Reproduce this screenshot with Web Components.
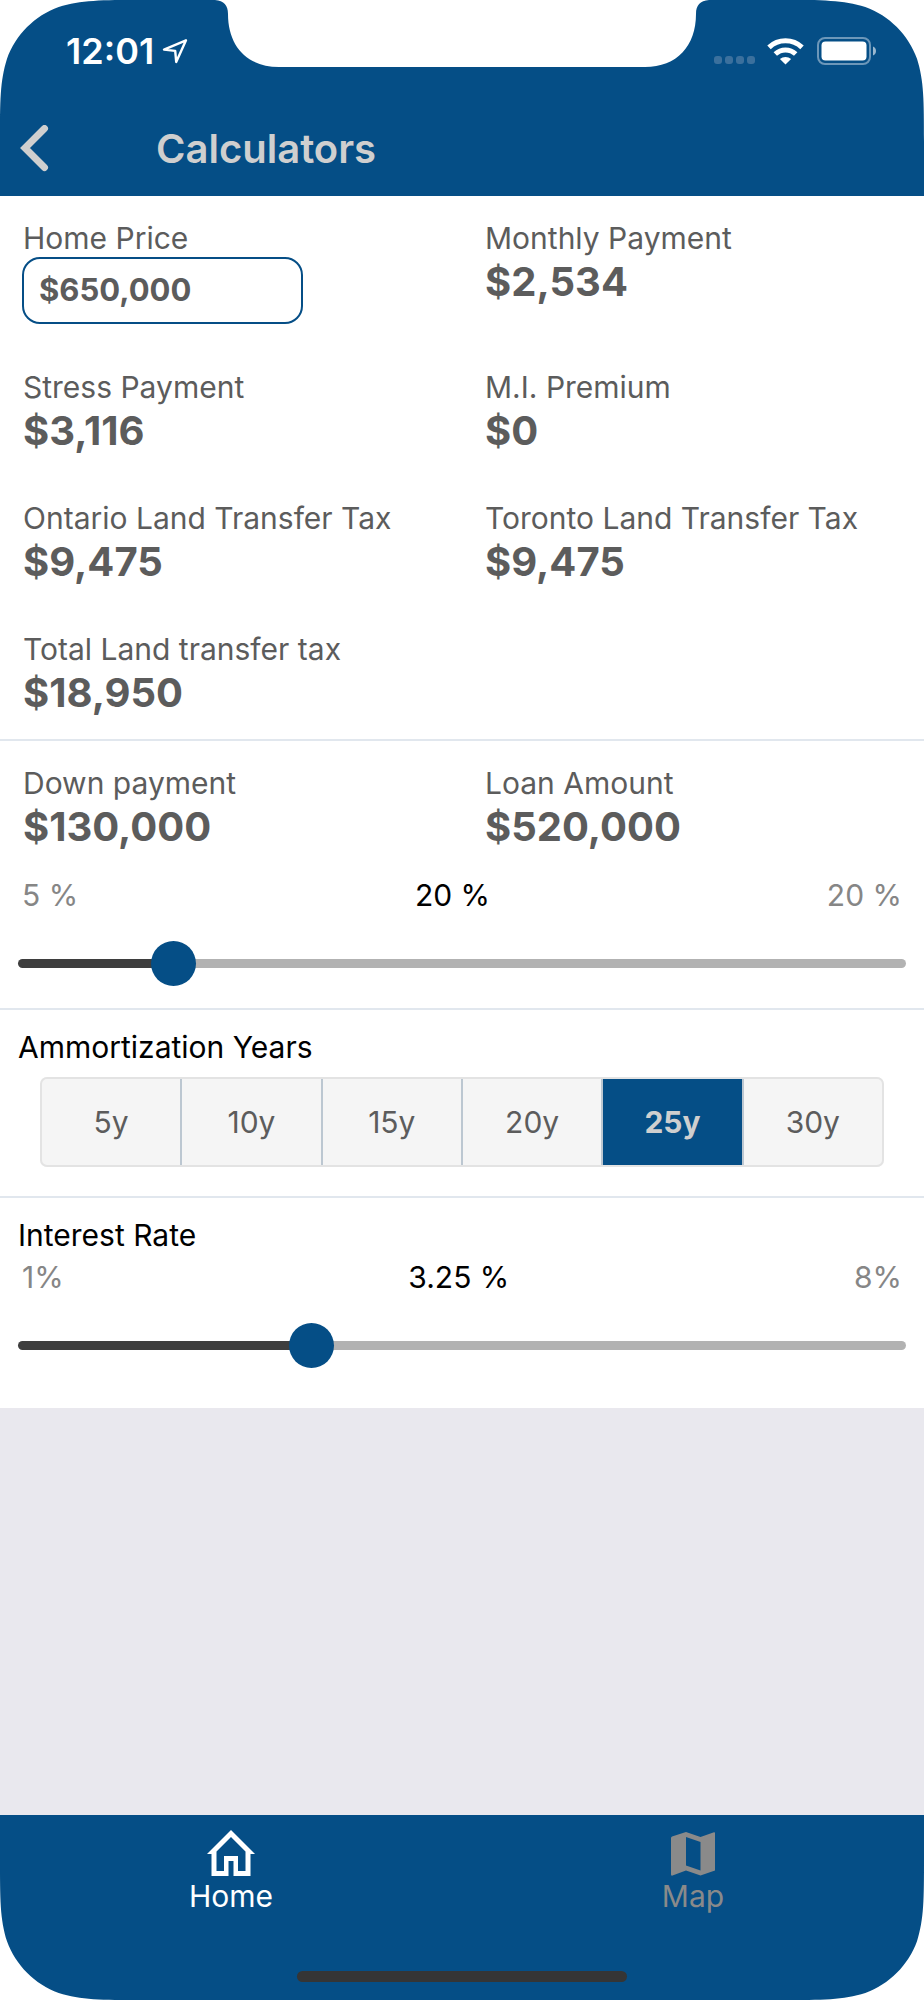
<!DOCTYPE html>
<html lang="en">
<head>
<meta charset="utf-8">
<meta name="viewport" content="width=device-width, initial-scale=1">
<title>Calculators</title>
<style>
  :root {
    --brand: #054e86;
    --on-brand: #cfcfcf;
    --text: #5c5c5c;
    --muted: #868686;
    --rule: #e1e7ee;
  }
  body {
    margin: 0;
    background: #fff;
    color: #000;
    font: 400 30px/36px Inter, "Liberation Sans", sans-serif;
  }
</style>
</head>
<body>
<calculator-app></calculator-app>

<script>
const define = (name, html, setup) => {
  const template = document.createElement('template');
  template.innerHTML = html;
  customElements.define(name, class extends HTMLElement {
    constructor() {
      super();
      this.attachShadow({ mode: 'open' }).append(template.content.cloneNode(true));
    }
    connectedCallback() {
      if (setup && !this.ready) { this.ready = true; setup(this, this.shadowRoot); }
    }
  });
};

/* Rounded screen corner, drawn for the top left and turned for the others */
define('screen-corner', `
  <style>
    :host { position: absolute; top: 0; left: 0; line-height: 0; pointer-events: none; }
    :host([at="top-right"]) { left: auto; right: 0; transform: scaleX(-1); }
    :host([at="bottom-left"]) { top: auto; bottom: 0; transform: scaleY(-1); }
    :host([at="bottom-right"]) { top: auto; left: auto; bottom: 0; right: 0; transform: scale(-1); }
  </style>
  <svg width="142" height="142" viewBox="0 0 142 142" aria-hidden="true">
    <path fill="#fff" d="M0 0H142C101 0 81 0 58.7 7C34.7 15.7 15.7 34.7 7 58.7C0 81 0 101 0 142Z"/>
  </svg>`);

define('status-bar', `
  <style>
    :host { display: grid; grid-template-columns: 1fr auto 1fr; height: 102px; color: #fff; }
    .time { display: flex; align-items: center; gap: 8px; padding-left: 66px; font-size: 36px; font-weight: 600; }
    .notch { display: block; }
    .icons { display: flex; align-items: center; padding-left: 5px; }
    .wifi { margin: 0 13px 0 12px; }
  </style>
  <div class="time"><span>12:01</span>
    <svg width="26" height="26" viewBox="0 0 26 26" fill="none" stroke="#fff" stroke-width="2.4" stroke-linejoin="round" aria-hidden="true">
      <path d="M24 2.300L2 11.600L13.200 12.900L14.200 24Z"/>
    </svg>
  </div>
  <svg class="notch" width="494" height="68" viewBox="0 0 494 68" aria-hidden="true">
    <path fill="#fff" d="M0 0C9 1 13 5 13 14C13 46 32 67 64 67H430C462 67 481 46 481 14C481 5 485 1 494 0Z"/>
  </svg>
  <div class="icons">
    <svg width="41" height="28" viewBox="0 0 41 28" fill="#3b709d" aria-hidden="true">
      <rect y="19" width="8" height="8" rx="3"/><rect x="11" y="19" width="8" height="8" rx="3"/>
      <rect x="22" y="19" width="8" height="8" rx="3"/><rect x="33" y="19" width="8" height="8" rx="3"/>
    </svg>
    <svg class="wifi" width="37" height="27" viewBox="0 0 37 27" fill="none" stroke="#fff" stroke-width="5" aria-hidden="true">
      <path d="M2 9.4A24 24 0 0 1 35 9.4"/><path d="M8.3 16A15 15 0 0 1 28.7 16"/>
      <path fill="#fff" stroke="none" d="M18.500 26.600L12.900 21A8.500 8.500 0 0 1 24.100 21Z"/>
    </svg>
    <svg width="60" height="28" viewBox="0 0 60 28" aria-hidden="true">
      <rect x="1" y="1" width="52" height="26" rx="7" fill="none" stroke="#6d97b9" stroke-width="2"/>
      <rect x="4.500" y="4.500" width="45" height="19" rx="4" fill="#fff"/>
      <path fill="#9bb8cf" d="M56 9.500C60 11 60 17 56 18.500Z"/>
    </svg>
  </div>`);

define('nav-bar', `
  <style>
    :host { display: flex; align-items: center; height: 94px; padding-bottom: 0; color: var(--on-brand); }
    button { box-sizing: border-box; width: 156px; height: 90px; padding: 0 20px; border: 0; background: none; color: inherit; text-align: left; }
    svg { display: block; }
    h1 { margin: 0; font-size: 40px; line-height: 48px; font-weight: 600; }
  </style>
  <button type="button" aria-label="Back">
    <svg width="29" height="48" viewBox="0 0 29 48" fill="none" stroke="currentColor" stroke-width="7" stroke-linecap="round" aria-hidden="true">
      <path d="M24.500 3.500L5 23L24.500 42.500"/>
    </svg>
  </button>
  <h1><slot></slot></h1>`);

define('money-figure', `
  <style>
    :host { display: block; color: var(--text); }
    dl, dd { margin: 0; }
    dd { font-size: 40px; line-height: 52px; font-weight: 700; }
  </style>
  <dl><dt></dt><dd><slot></slot></dd></dl>`,
  (host, root) => { root.querySelector('dt').textContent = host.getAttribute('label'); });

define('money-input', `
  <style>
    :host { display: block; color: var(--text); }
    label { display: block; }
    input {
      box-sizing: border-box; display: block; width: 64%; height: 67px; margin: 1px 0 2px -1px; padding: 0 15px 2px;
      border: 2px solid var(--brand); border-radius: 18px; background: #fff;
      color: inherit; font: inherit; font-size: 31px; font-weight: 700; outline: 0;
    }
  </style>
  <label for="amount"></label>
  <input id="amount" type="text" inputmode="numeric">`,
  (host, root) => {
    root.querySelector('label').textContent = host.getAttribute('label');
    root.querySelector('input').value = host.getAttribute('value');
  });

define('figure-grid', `
  <style>
    :host { display: grid; grid-template-columns: 1fr 1fr; row-gap: 43px; }
    ::slotted(*) { min-width: 0; padding-left: 23px; }
  </style>
  <slot></slot>`);

define('form-section', `
  <style>
    :host { display: block; background: #fff; border-bottom: 2px solid var(--rule); }
    :host([last]) { border-bottom: 0; }
  </style>
  <slot></slot>`);

define('range-slider', `
  <style>
    :host { display: block; }
    .scale { display: flex; justify-content: space-between; padding: 0 22px; color: var(--muted); }
    output { color: #000; }
    input {
      -webkit-appearance: none; appearance: none; display: block; box-sizing: border-box;
      width: calc(100% - 36px); height: 45px; margin: 28px 18px 0; background: none; outline: 0;
    }
    input::-webkit-slider-runnable-track {
      height: 9px; border-radius: 5px;
      background: linear-gradient(to right, #3e3e3e var(--filled), #b2b2b2 var(--filled));
    }
    input::-webkit-slider-thumb {
      -webkit-appearance: none; width: 45px; height: 45px; margin-top: -18px; border-radius: 50%; background: var(--brand);
    }
  </style>
  <div class="scale"><span class="min"></span><output for="range"></output><span class="max"></span></div>
  <input id="range" type="range">`,
  (host, root) => {
    const input = root.querySelector('input');
    const output = root.querySelector('output');
    const get = name => host.getAttribute(name);
    for (const name of ['min', 'max', 'step', 'value']) input.setAttribute(name, get(name));
    input.setAttribute('aria-label', get('label'));
    root.querySelector('.min').textContent = get('min-text');
    root.querySelector('.max').textContent = get('max-text');
    const update = () => {
      output.textContent = input.value + ' %';
      input.style.setProperty('--filled', (input.value - input.min) / (input.max - input.min) * 100 + '%');
    };
    input.addEventListener('input', update);
    update();
  });

define('segmented-choice', `
  <style>
    :host { display: block; margin: 0 40px; }
    fieldset { display: flex; height: 86px; margin: 0; padding: 0; min-width: 0; border: 2px solid #e3e3e3; border-radius: 7px; overflow: hidden; background: #f5f5f5; color: var(--text); }
    label { position: relative; flex: 1; display: flex; align-items: center; justify-content: center; border-left: 2px solid #bcc7d1; }
    label:first-child { border-left: 0; }
    input { position: absolute; inset: 0; margin: 0; opacity: 0; }
    label:has(:checked) { background: var(--brand); color: var(--on-brand); font-weight: 700; }
  </style>
  <fieldset></fieldset>`,
  (host, root) => {
    const fieldset = root.querySelector('fieldset');
    fieldset.setAttribute('aria-label', host.getAttribute('label'));
    for (const option of host.getAttribute('options').split(' ')) {
      const label = document.createElement('label');
      const input = document.createElement('input');
      input.type = 'radio';
      input.name = 'choice';
      input.value = option;
      input.checked = option === host.getAttribute('value');
      label.append(input, option);
      fieldset.append(label);
    }
  });

define('tab-link', `
  <style>
    :host { flex: 1; display: block; color: #8a8a8a; }
    :host([active]) { color: #fff; }
    a { display: flex; flex-direction: column; align-items: center; padding-top: 15px; color: inherit; text-decoration: none; }
    ::slotted(svg) { display: block; }
  </style>
  <a href="#"><slot name="icon"></slot><span><slot></slot></span></a>`);

define('tab-bar', `
  <style>
    :host { position: relative; display: flex; flex-direction: column; justify-content: space-between; height: 185px; background: var(--brand); }
    nav { display: flex; }
    .indicator { width: 330px; height: 11px; margin: 0 auto 18px; border-radius: 6px; background: #353535; }
  </style>
  <nav><slot></slot></nav>
  <div class="indicator"></div>
  <screen-corner at="bottom-left"></screen-corner>
  <screen-corner at="bottom-right"></screen-corner>`);

define('calculator-app', `
  <style>
    :host { display: flex; flex-direction: column; min-height: 100vh; }
    header { position: relative; background: var(--brand); }
    main { flex: 1; background: #e9e8ee; }
    h2 { margin: 0; padding-left: 18px; font: inherit; }
    .summary { padding: 24px 0 20px; }
    .loan { padding: 24px 0 22px; }
    .loan range-slider { margin-top: 24px; }
    .years { padding: 19px 0 29px; }
    .years h2 { margin-bottom: 12px; }
    .rate { padding: 19px 0 40px; }
    .rate h2 { margin-bottom: 6px; }
  </style>
  <header>
    <screen-corner at="top-left"></screen-corner>
    <screen-corner at="top-right"></screen-corner>
    <status-bar></status-bar>
    <nav-bar>Calculators</nav-bar>
  </header>
  <main>
    <form-section class="summary">
      <figure-grid>
        <money-input label="Home Price" value="$650,000"></money-input>
        <money-figure label="Monthly Payment">$2,534</money-figure>
        <money-figure label="Stress Payment">$3,116</money-figure>
        <money-figure label="M.I. Premium">$0</money-figure>
        <money-figure label="Ontario Land Transfer Tax">$9,475</money-figure>
        <money-figure label="Toronto Land Transfer Tax">$9,475</money-figure>
        <money-figure label="Total Land transfer tax">$18,950</money-figure>
      </figure-grid>
    </form-section>
    <form-section class="loan">
      <figure-grid>
        <money-figure label="Down payment">$130,000</money-figure>
        <money-figure label="Loan Amount">$520,000</money-figure>
      </figure-grid>
      <range-slider label="Down payment" min="5" max="100" step="1" value="20" min-text="5 %" max-text="20 %"></range-slider>
    </form-section>
    <form-section class="years">
      <h2>Ammortization Years</h2>
      <segmented-choice label="Ammortization Years" options="5y 10y 15y 20y 25y 30y" value="25y"></segmented-choice>
    </form-section>
    <form-section class="rate" last>
      <h2>Interest Rate</h2>
      <range-slider label="Interest Rate" min="1" max="8" step="0.05" value="3.25" min-text="1%" max-text="8%"></range-slider>
    </form-section>
  </main>
  <tab-bar>
    <tab-link active>
      <svg slot="icon" width="48" height="48" viewBox="0 0 48 48" fill="currentColor" aria-hidden="true">
        <path fill-rule="evenodd" d="M24 0L48 24H43.500V46H26.500V31H21.500V46H4.500V24H0ZM24 7L9.500 21.500V41H17V26H31V41H38.500V21.500Z"/>
      </svg>Home
    </tab-link>
    <tab-link>
      <svg slot="icon" width="48" height="48" viewBox="0 0 48 48" fill="currentColor" aria-hidden="true">
        <path fill-rule="evenodd" d="M3 6.500L17 2L31.500 7L45 2.200Q46 2 46 3V40.500L31.500 45.500L17 40.500L3.500 45.500Q2 46 2 44.500V8Q2 7 3 6.500ZM17 7V35.500L31.500 40.500V12Z"/>
      </svg>Map
    </tab-link>
  </tab-bar>`);
</script>
</body>
</html>
